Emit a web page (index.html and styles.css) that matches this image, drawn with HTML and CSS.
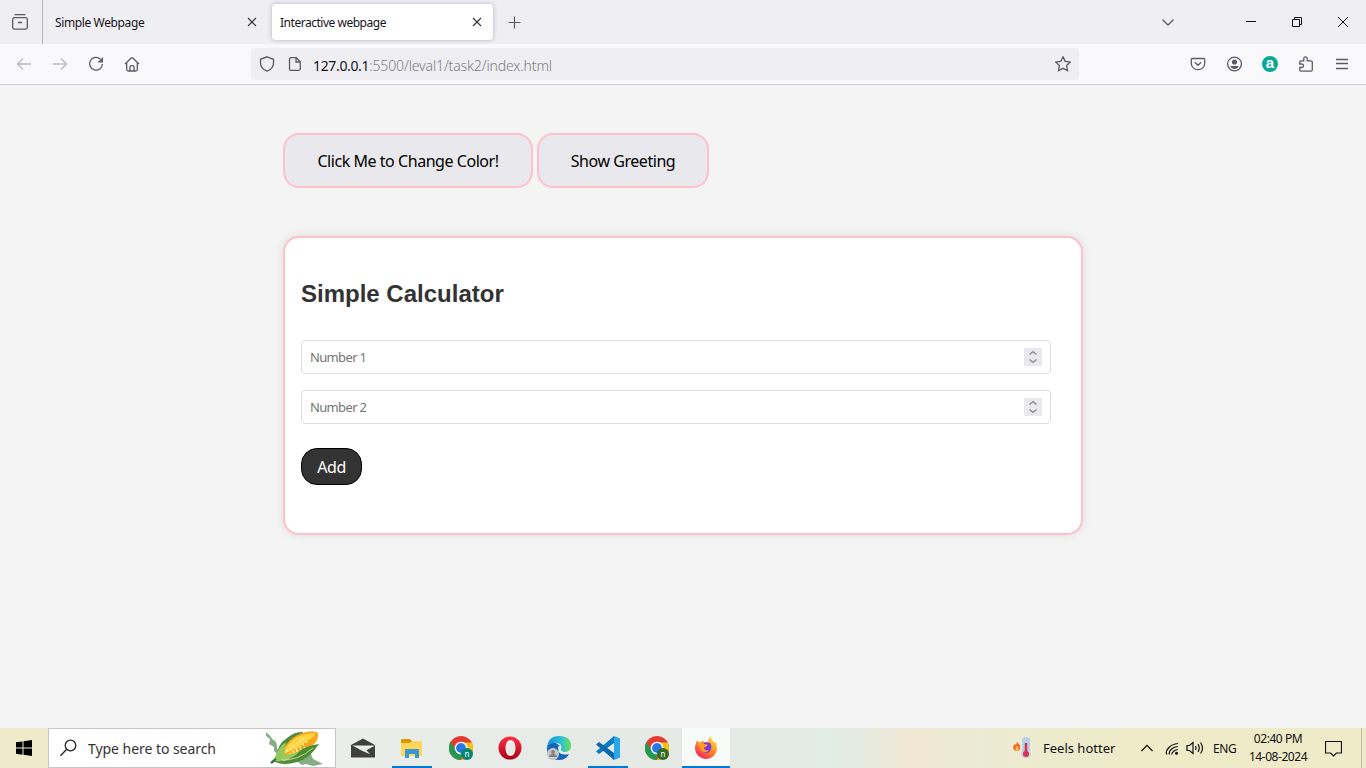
FILE: index.html
```html
<!DOCTYPE html>
<html lang="en">
<head>
<meta charset="utf-8">
<title>Interactive webpage</title>
<link rel="stylesheet" href="styles.css">
</head>
<body>
<header class="tabbar">
  <div class="recent"><svg class="i16" viewBox="0 0 16 16"><path d="M2.700 1.200Q3 .7 4 .7h8q1 0 1.300.5M2.500 3.700h11q1.800 0 1.800 1.800v7.800q0 1.800-1.800 1.800h-11q-1.800 0-1.800-1.800V5.500q0-1.800 1.800-1.800zM6 8.500h4"/></svg></div>
  <div class="tab first-tab"><span class="tab-title t-simple">Simple Webpage</span><svg class="i16 x" viewBox="0 0 16 16"><path d="M4 4l8 8M12 4l-8 8"/></svg></div>
  <div class="tab active"><span class="tab-title t-inter">Interactive webpage</span><svg class="i16 x" viewBox="0 0 16 16"><path d="M4 4l8 8M12 4l-8 8"/></svg></div>
  <svg class="i16 plus" viewBox="0 0 16 16"><path d="M8.500 2.500v12M2.500 8.500h12"/></svg>
  <div class="winctl">
    <div class="wc list"><svg class="i16" viewBox="0 0 16 16"><path d="M2.500 5.500L8 11l5.500-5.500"/></svg></div>
    <div class="wc"><svg class="i16 dark" viewBox="0 0 16 16"><path d="M3 7.500h10"/></svg></div>
    <div class="wc"><svg class="i16 dark" viewBox="0 0 16 16"><path d="M3.500 5.500h7v7h-7zM5.500 5.500v-2h7v7h-2"/></svg></div>
    <div class="wc"><svg class="i16 dark" viewBox="0 0 16 16"><path d="M3 3l10 10M13 3L3 13"/></svg></div>
  </div>
</header>
<nav class="toolbar">
  <div class="cell off"><svg class="i16" viewBox="0 0 16 16"><path d="M15 8H1.500M7 2.500L1.500 8 7 13.500"/></svg></div>
  <div class="cell off"><svg class="i16" viewBox="0 0 16 16"><path d="M1 8h13.500M9 2.500L14.500 8 9 13.500"/></svg></div>
  <div class="cell"><svg class="i16" viewBox="0 0 16 16"><path d="M12.500 3.200A6.400 6.400 0 1 0 14.400 8"/><path class="solid" d="M15 1v5.500H9.500z"/></svg></div>
  <div class="cell"><svg class="i16" viewBox="0 0 16 16"><path d="M1 8l6.200-6q.8-.7 1.600 0L15 8M2.700 6.500v7q0 1.500 1.500 1.500h7.600q1.500 0 1.500-1.500v-7M6 15v-4q0-1.300 1.300-1.300h1.400Q10 9.700 10 11v4"/></svg></div>
  <div class="url">
    <svg class="i16" viewBox="0 0 16 16"><path d="M8 .8l6.500 2.500v3.200c0 4-2.500 7.300-6.500 8.700-4-1.400-6.500-4.700-6.500-8.700V3.300z"/></svg>
    <svg class="i16 page-icon" viewBox="0 0 16 16"><path d="M3.800 1.700h5.400l4.100 4.100v7q0 1.500-1.500 1.500h-8q-1.300 0-1.300-1.500v-9.600q0-1.500 1.300-1.500zM9 2v4h4"/></svg>
    <span class="address"><b>127.0.0.1</b>:5500/leval1/task2/index.html</span>
    <svg class="i16 star" viewBox="0 0 16 16"><path d="M8 .9l2.200 4.500 5 .7-3.600 3.500.9 5L8 12.300l-4.500 2.300.9-5L.8 6.100l5-.7z"/></svg>
  </div>
  <div class="cell first"><svg class="i16" viewBox="0 0 16 16"><path d="M2.500 2.500h11q1.200 0 1.200 1.200V7.500a6.700 6.200 0 0 1-13.400 0V3.700q0-1.200 1.200-1.200zM4.800 6.300L8 9.300l3.200-3"/></svg></div>
  <div class="cell"><svg class="i16" viewBox="0 0 16 16"><circle cx="8.500" cy="8" r="6.900"/><circle class="solid" cx="8.500" cy="6" r="2.600"/><path class="solid" d="M4.300 10h8.400q-1 3-4.200 3t-4.200-3z"/></svg></div>
  <div class="cell"><span class="ext">a</span></div>
  <div class="cell"><svg class="i16" viewBox="0 0 16 16"><path d="M1.800 8V5.800q0-1 1-1h3V2.900q0-2 1.700-2t1.700 2v1.900h3.900q1.200 0 1.200 1.200v7.800q0 1.400-1.200 1.400H3q-1.200 0-1.200-1.200v-2.500h2q1.800 0 1.800-1.700T3.800 8z"/></svg></div>
  <div class="cell"><svg class="i16" viewBox="0 0 16 16"><path d="M2 3.500h12M2 7.500h12M2 12.500h12"/></svg></div>
</nav>
<main class="page">
  <div class="container">
    <div class="actions"><button class="action"><span>Click Me to Change Color!</span></button><button class="action greet"><span>Show Greeting</span></button></div>
    <section class="calculator">
      <h2>Simple Calculator</h2>
      <div class="field"><span>Number 1</span><span class="spin"><svg viewBox="0 0 18 18"><path d="M5.500 6.500L9 3.700l3.500 2.800M5.500 11.500L9 14.300l3.500-2.800"/></svg></span></div>
      <div class="field"><span>Number 2</span><span class="spin"><svg viewBox="0 0 18 18"><path d="M5.500 6.500L9 3.700l3.500 2.800M5.500 11.500L9 14.300l3.500-2.800"/></svg></span></div>
      <button class="add">Add</button>
    </section>
  </div>
</main>
<footer class="taskbar">
  <div class="start"><svg width="16" height="16" viewBox="0 0 16 16"><path d="M0 2.300L6.500 1.400V7.500H0zM7.500 1.200L16 0v7.500H7.500zM0 8.500h6.500v6.200L0 13.800zM7.500 8.500H16V16l-8.500-1.200z"/></svg></div>
  <div class="search">
    <svg class="lens" width="18" height="18" viewBox="0 0 18 18"><circle cx="10.500" cy="6.500" r="5.300"/><path d="M6.700 10.300L.5 16.700"/></svg>
    <span class="t-search">Type here to search</span>
    <svg class="corn" width="60" height="38" viewBox="0 0 60 38">
      <path fill="#86ad84" d="M2 3q4 3 7 8 4 0 4 8l4 9-7-6 0-4-5-3 1-5-4-3zM31 31l9-8 7 2 2 5 10 5-10 2-7-2-4 1z"/>
      <path fill="#4e8a42" d="M12 30Q13 15 23 9q8-7 16-6-8 10-13 20l-8 10z"/>
      <path fill="#f5a719" d="M17 28C20 14 29 6 42 3q9-2 12 1 1 7-5 12-9 10-31 15z"/>
      <path fill="#ffd443" d="M20 23C25 10 36 5 51 4q1 3-8 8-8 7-23 13z"/>
      <path stroke="#fff0ab" stroke-width="1.700" stroke-linecap="round" stroke-dasharray=".5 3.500" d="M23 22l19-14M26 25l19-14M22 27l20-9"/>
      <path fill="#4c8c35" d="M9 31q11 4 20-4 12-11 26-12-10 15-22 18-13 4-22 0z"/>
      <path fill="#96c85d" d="M10 30q5-13 12-17-2 9-1 13 10-1 16-5-9 11-24 11z"/>
      <path stroke="#367333" stroke-width="2.500" d="M7 34l5-4"/>
      <path stroke="#bfdf83" fill="none" d="M17 31Q34 32 49 19"/>
    </svg>
  </div>
  <div class="apps">
    <div class="app"><svg width="24" height="20" viewBox="0 0 24 20"><path fill="#404040" d="M0 7L12 .5 24 7v12.500H0z"/><path fill="#e9eeea" d="M1.500 7.500H24l-8.500 4.700 3.500 4-8-3.500z"/></svg></div>
    <div class="app open"><svg width="22" height="19" viewBox="0 0 22 19"><path fill="#d99800" d="M0 1q0-1 1-1h8l2 2v4H0z"/><path fill="#ffd55a" d="M0 4h9l2-2h9q1 0 1 1v14H0z"/><path fill="#3997d3" d="M4 11q0-1 1-1h12q1 0 1 1v8h-4v-4H8v4H4z"/></svg></div>
    <div class="app"><svg width="24" height="24" viewBox="0 0 24 24"><circle cx="12" cy="12" r="12" fill="#e33b2e"/><path fill="#229a51" d="M1.500 6L7 15l5 2v7A12 12 0 0 1 1.500 6z"/><path fill="#fbc116" d="M12 6.500h10.700A12 12 0 0 1 12 24l5-9z"/><circle cx="12" cy="12" r="6.300" fill="#fff"/><circle cx="12" cy="12" r="4.900" fill="#2879e5"/><circle cx="18" cy="18" r="6" fill="#078577"/><text x="18" y="20.500" class="badge">n</text></svg></div>
    <div class="app"><svg width="24" height="24" viewBox="0 0 24 24"><defs><linearGradient id="opera" x2="0" y2="1"><stop stop-color="#ff3042"/><stop offset="1" stop-color="#a90018"/></linearGradient></defs><path fill="url(#opera)" fill-rule="evenodd" d="M12 .5a11.500 11.500 0 1 0 0 23 11.500 11.500 0 0 0 0-23zM12.500 4c-3 0-5 3.500-5 8s2 8 5 8 5-3.500 5-8-2-8-5-8z"/></svg></div>
    <div class="app"><svg width="24" height="24" viewBox="0 0 24 24"><defs><linearGradient id="edge"><stop stop-color="#168dd5"/><stop offset=".55" stop-color="#27bddd"/><stop offset="1" stop-color="#68df57"/></linearGradient></defs><path fill="#1566b8" d="M0 12Q1 5 7 6l8 5-4 4q3 5 11 3-3 6-10 6Q0 24 0 12z"/><path fill="url(#edge)" d="M0 12Q1 0 12 0q12 0 12 10 0 6-7 6-4 0-3.500-3Q16 8 10 7 3 6 0 12z"/><path fill="#e8eeee" d="M11 11q2-3 3.500 0-2 4 2 5-4 1-5-2z"/><circle cx="6" cy="18" r="6" fill="#c9c7c4"/><circle cx="6" cy="16" r="2" fill="#85817e"/><path fill="#85817e" d="M2 21q0-3 4-3t4 3z"/></svg></div>
    <div class="app open"><svg width="24" height="24" viewBox="0 0 24 24"><path fill="#087dc2" d="M18 0v7L3 18l-3-2.500z"/><path fill="#0c69ad" d="M3 6l15 11v7L0 8.500z"/><path fill="#29a6ec" d="M18 0l6 2.500v19L18 24z"/></svg></div>
    <div class="app"><svg width="24" height="24" viewBox="0 0 24 24"><circle cx="12" cy="12" r="12" fill="#e33b2e"/><path fill="#229a51" d="M1.500 6L7 15l5 2v7A12 12 0 0 1 1.500 6z"/><path fill="#fbc116" d="M12 6.500h10.700A12 12 0 0 1 12 24l5-9z"/><circle cx="12" cy="12" r="6.300" fill="#fff"/><circle cx="12" cy="12" r="4.900" fill="#2879e5"/><circle cx="18" cy="18" r="6" fill="#356c24"/><text x="18" y="20.500" class="badge">n</text></svg></div>
    <div class="app open current"><svg width="24" height="24" viewBox="0 0 24 24"><defs><linearGradient id="fox" x1=".85" x2=".2" y2="1"><stop stop-color="#ffe838"/><stop offset=".5" stop-color="#ff8b20"/><stop offset="1" stop-color="#f51d65"/></linearGradient></defs><path fill="url(#fox)" d="M1.500 9L3 4l1.500 2.500L7 6l2-1.500L10 6l4 .5Q14 2 17 0q0 4 3.500 6.500l1-.5q1.500 3 1.500 7a11 10.800 0 1 1-21.500-4z"/><path fill="#7c39d8" d="M8 8q3-3 8-1 2 2 1 6-1 4-5 4-4-1-4-4z"/><path fill="#ff9d28" d="M3 8q3-2 6-1.500l1 1.500 3.500.5q0 2-3.500 3 0 3 3.500 3l1.500-.5q-2 3-5 2-4-1-4-5z"/></svg></div>
  </div>
  <div class="tray">
    <svg class="weather" width="18" height="22" viewBox="0 0 18 22"><path fill="#ef6d24" d="M4 5q4 3 3 7-1 2-3 2-3 0-4-3 0-3 2-4l1 1z"/><path fill="#ffc149" d="M4 9q3 3 0 5-3-2 0-5z"/><path fill="#b7d1eb" d="M9 3q0-3 4-3t4 3v11q2 7-4 7-7-1-4-7z"/><path stroke="#dc304b" stroke-width="2.500" d="M13 6v9"/><circle cx="13" cy="17" r="3" fill="#dc304b"/></svg>
    <span class="t-weather">Feels hotter</span>
    <svg class="line up" width="12" height="8" viewBox="0 0 12 8"><path d="M.5 7L6 1.300 11.500 7"/></svg>
    <svg class="line wifi" width="14" height="14" viewBox="0 0 14 14"><path d="M2 13.500Q0 11 3.500 7 7 3 13 2.500M4.500 13.500Q3.500 11 6 8.500 9 5.500 13 5.500M7 13.500Q6.500 12 8.500 10.500 10.500 8.500 13 8.500"/><circle cx="11.500" cy="12.300" r="1.500" class="dot"/></svg>
    <svg class="line sound" width="18" height="14" viewBox="0 0 18 14"><path d="M1 4.500h2.500L7 1.500v11L3.500 9.500H1zM9.500 5q1 2 0 4M12 3q2.500 4 0 8M14.500 1.500q4 5.500 0 11"/></svg>
    <span class="t-eng">ENG</span>
    <div class="clock"><span class="t-time">02:40 PM</span><span class="t-date">14-08-2024</span></div>
    <svg class="line note" width="17" height="17" viewBox="0 0 17 17"><path d="M.5 1.500h16v11.500h-5l-3 3-3-3h-5z"/></svg>
    <i class="peek"></i>
  </div>
</footer>
</body>
</html>
```
FILE: styles.css
```css
* { box-sizing: border-box; }
body { margin: 0; width: 1366px; height: 768px; display: flex; flex-direction: column; overflow: hidden; background: #f4f4f4; color: #15141a; font-family: "Noto Sans", sans-serif; }
svg { display: block; flex: none; }
span { white-space: nowrap; }
.i16 { width: 16px; height: 16px; fill: none; stroke: #5b5b66; stroke-width: 1.3; }
.i16 .solid { fill: #5b5b66; stroke: none; }
.i16.x { stroke: #33323a; stroke-width: 1.1; }
.i16.dark { stroke: #111; stroke-width: 1; }

.tabbar { height: 44px; flex: none; display: flex; align-items: center; background: #efeef3; }
.recent { width: 43px; height: 44px; padding: 14px 0 0 12px; border-right: 1px solid #b5b4bb; }
.tab { width: 221px; height: 36px; padding: 0 8px 0 12px; display: flex; align-items: center; justify-content: space-between; }
.tab.first-tab { margin-right: 8px; padding-right: 4px; }
.tab.active { padding-left: 8px; background: #fff; border-radius: 4px; box-shadow: 0 0 4px #8889; }
.tab-title { font-size: 12px; padding-top: 1px; }
.t-simple { letter-spacing: -.38px; }
.t-inter { letter-spacing: -.48px; }
.plus { margin-left: 13px; stroke-width: 1.2; }
.winctl { display: flex; margin-left: auto; }
.wc { width: 46px; display: flex; justify-content: center; }
.wc.list { margin-right: 37px; }

.toolbar { height: 41px; flex: none; display: flex; align-items: center; padding: 0 6px; background: #f9f9fb; border-bottom: 1px solid #cfced4; }
.cell { width: 36px; display: flex; justify-content: center; }
.cell.off { opacity: .4; }
.cell.first { margin-left: 101px; }
.url { width: 828px; height: 32px; margin-left: 101px; padding: 0 8px; display: flex; align-items: center; background: #efeef3; border-radius: 4px; }
.page-icon { margin-left: 12px; }
.address { margin-left: 10px; padding-top: 2px; font-size: 14px; color: #7d7c84; font-weight: 300; letter-spacing: -.13px; }
.address b { font-weight: 400; color: #15141a; letter-spacing: -.35px; }
.star { margin-left: auto; }
.ext { width: 16px; height: 16px; border-radius: 50%; background: #0aa798; color: #fff; font: bold 15px/14px "Liberation Sans", sans-serif; text-align: center; }

.page { height: 643px; flex: none; background: #f4f4f4; }
.container { width: 800px; margin: 0 auto; padding-top: 48px; }
.actions { display: flex; gap: 4px; }
button { display: flex; align-items: center; justify-content: center; padding: 0; font: 16px "Noto Sans", sans-serif; letter-spacing: -.45px; }
.action { width: 250px; height: 55px; background: #e9e9ed; border: 2px solid #ffc0cb; border-radius: 16px; color: #000; }
.action.greet { width: 172px; }
.calculator { width: 800px; height: 299px; margin-top: 48px; padding: 40px 16px 0; background: #fff; border: 2px solid #ffc0cb; border-radius: 16px; box-shadow: 0 0 10px rgba(0,0,0,.1); }
h2 { margin: 0 0 30px; color: #333; font: bold 24px/32px "Liberation Sans", sans-serif; }
.field { width: 750px; height: 34px; margin-bottom: 16px; padding: 0 8px; display: flex; align-items: center; justify-content: space-between; border: 1px solid #ddd; border-radius: 4px; color: #757575; font-size: 13px; letter-spacing: -.65px; }
.spin { width: 18px; height: 18px; background: #e9e9ed; }
.spin path { fill: none; stroke: #8f8f9d; stroke-width: 1.5; }
.add { width: 61px; height: 37px; margin-top: 24px; background: #333; border: 1px solid #000; border-radius: 16px; color: #fff; }

.taskbar { height: 40px; flex: none; display: flex; background: linear-gradient(90deg, #efebca 0, #efebca 48px, #e9eeea 336px, #e4e9e5 730px, #e1ede5 825px, #e6eae0 865px, #f0e7d3 910px, #ecebd3 980px, #efebc9 1130px, #efebc9 1366px); color: #111; }
.start { width: 48px; padding: 12px 16px; }
.search { width: 288px; padding-left: 11px; display: flex; align-items: center; background: #fff; border: 1px solid #c5c5c5; font-size: 14px; color: #333; }
.lens { fill: none; stroke: #222; stroke-width: 1.3; }
.t-search { margin-left: 10px; letter-spacing: -.05px; }
.corn { margin-left: auto; margin-right: 11px; }
.apps { display: flex; gap: 1px; margin-left: 3px; }
.app { width: 48px; height: 40px; display: flex; align-items: center; justify-content: center; position: relative; }
.app.open::after { content: ""; position: absolute; left: 4px; right: 4px; bottom: 0; height: 2px; background: #0078d7; }
.app.current { background: #f8faf9; }
.app.current::after { left: 0; right: 0; }
.badge { font: 8px "Noto Sans", sans-serif; fill: #fff; text-anchor: middle; }
.tray { display: flex; align-items: center; margin-left: auto; }
.t-weather { width: 73px; margin-left: 12px; font-size: 13px; }
.line { fill: none; stroke: #111; stroke-width: 1.2; }
.dot { fill: #111; stroke: none; }
.up { margin-left: 25px; }
.wifi { margin-left: 12px; }
.sound { margin-left: 7px; }
.t-eng { width: 23px; margin-left: 9px; font-size: 12px; letter-spacing: -.4px; }
.clock { width: 58px; margin-left: 13px; display: flex; flex-direction: column; align-items: center; font-size: 12px; line-height: 18px; letter-spacing: -.45px; }
.note { margin-left: 18px; }
.peek { width: 1px; height: 40px; margin: 0 4px 0 19px; background: #bdbba3; }
```
